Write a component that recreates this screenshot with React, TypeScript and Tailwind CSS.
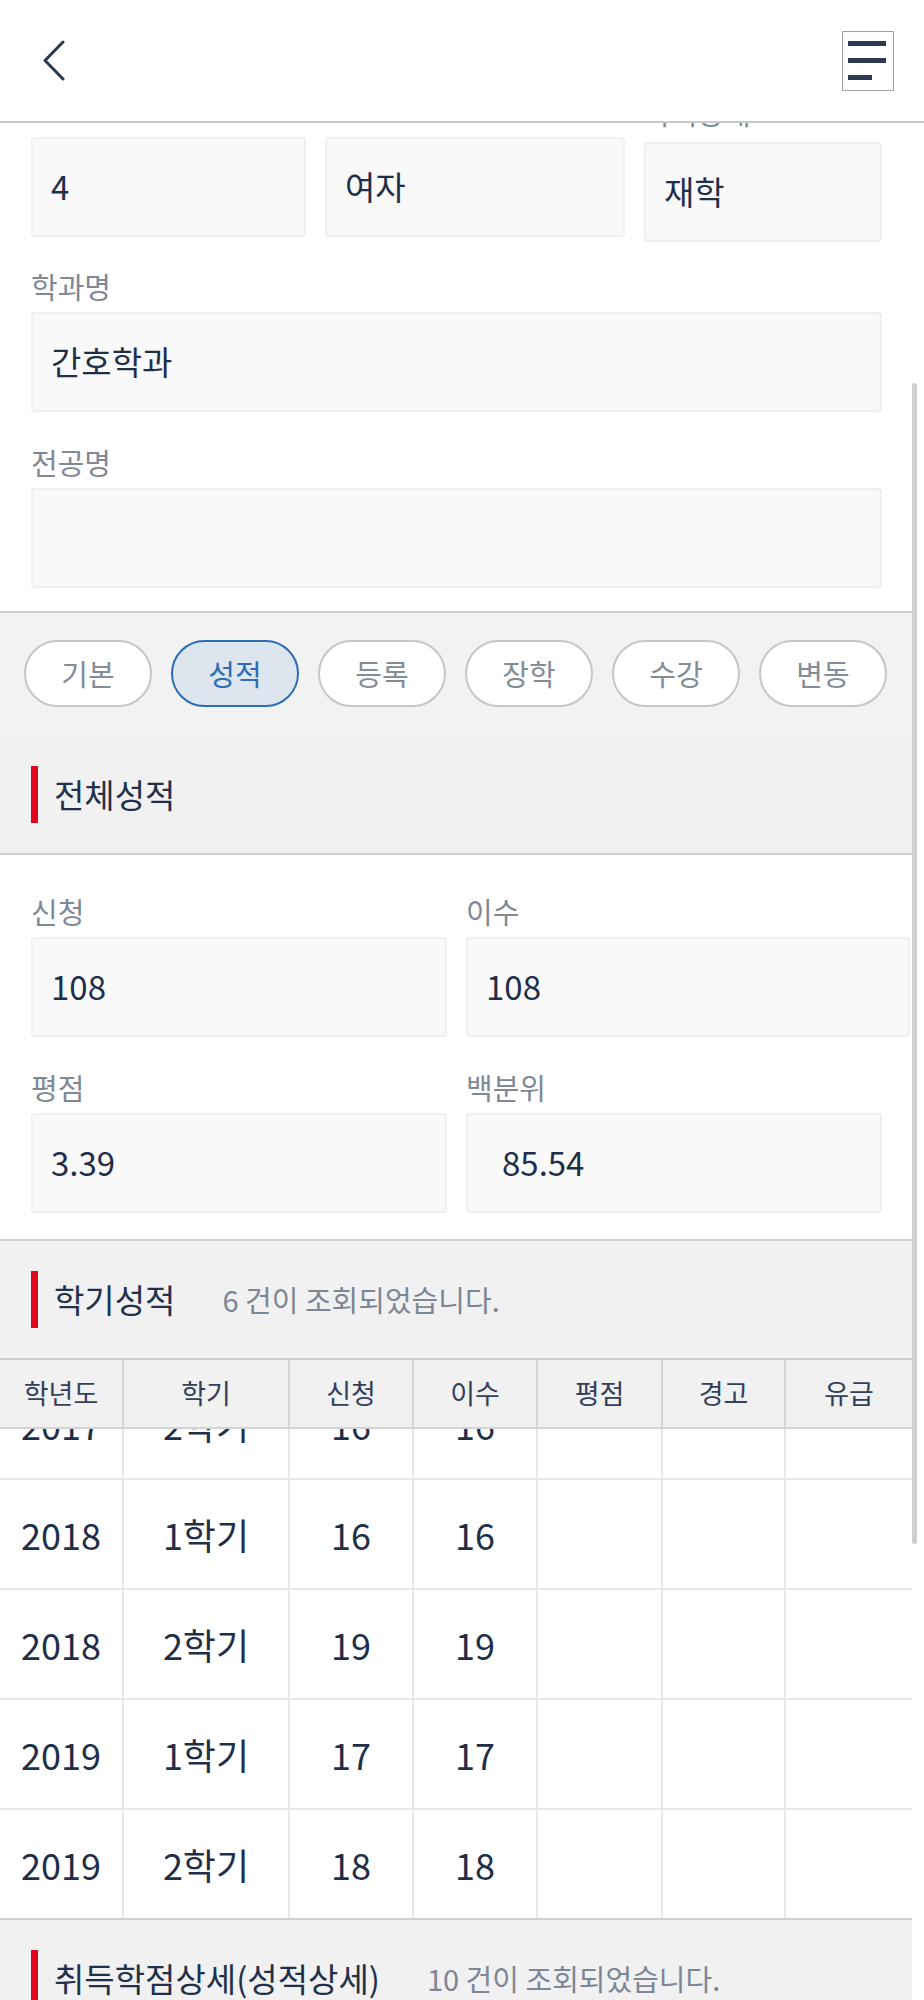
import clsx from "clsx";

const COLS = ["학년도", "학기", "신청", "이수", "평점", "경고", "유급"];

const ROWS = [
  { year: "2017", term: "2학기", req: "16", done: "16" },
  { year: "2018", term: "1학기", req: "16", done: "16" },
  { year: "2018", term: "2학기", req: "19", done: "19" },
  { year: "2019", term: "1학기", req: "17", done: "17" },
  { year: "2019", term: "2학기", req: "18", done: "18" },
];

const TABS = ["기본", "성적", "등록", "장학", "수강", "변동"];

const GRID = "grid grid-cols-[124px_166px_124px_124px_125px_123px_1fr]";

function Field({
  label,
  value,
  className,
  boxClass,
}: {
  label: string;
  value?: string;
  className?: string;
  boxClass?: string;
}) {
  return (
    <div className={clsx("flex flex-col", className)}>
      <div className="h-[40px] text-[29px] leading-[40px] text-[#7f8896]">{label}</div>
      <div
        className={clsx(
          "mt-[6px] flex h-[100px] items-center rounded-[4px] border-2 border-[#efefef] bg-[#f9f9f9] pl-[18px] text-[33px] text-[#1f2f4a]",
          boxClass
        )}
      >
        {value}
      </div>
    </div>
  );
}

function SectionTitle({ title, count }: { title: string; count?: string }) {
  return (
    <div className="flex h-[117px] items-center pl-[31px]">
      <div className="h-[57px] w-[7px] bg-[#e1061b]" />
      <span className="ml-[16px] text-[33px] leading-none text-[#22314b]">{title}</span>
      {count && (
        <span className="ml-[47px] text-[29px] leading-none text-[#7d8696]">{count}</span>
      )}
    </div>
  );
}

export default function App() {
  return (
    <div className="relative h-[2000px] w-[924px] overflow-hidden bg-white font-['Noto_Sans_CJK_KR','Noto_Sans',sans-serif] text-[#1f2f4a]">
      {/* 상단 헤더 */}
      <header className="relative z-10 flex h-[123px] items-center justify-between border-b-2 border-[#cbcbcb] bg-white pl-[42px] pr-[30px]">
        <svg width="24" height="42" viewBox="0 0 24 42" fill="none">
          <path d="M21 2 L3 20.5 L21 39" stroke="#2b3a52" strokeWidth="3" strokeLinecap="round" strokeLinejoin="round" />
        </svg>
        <div className="flex h-[60px] w-[52px] flex-col items-start justify-center gap-[12px] border-[1.5px] border-[#9ea3aa] pl-[5px]">
          <div className="h-[5px] w-[38px] bg-[#2b3a52]" />
          <div className="h-[5px] w-[38px] bg-[#2b3a52]" />
          <div className="h-[5px] w-[24px] bg-[#2b3a52]" />
        </div>
      </header>

      <main className="w-[912px]">
        {/* 기본 정보 */}
        <section className="overflow-hidden border-b-2 border-[#cfcfcf] pb-[23px] pl-[31px] pr-[30px]">
          <div className="-mt-[37px] flex items-start gap-[19px]">
            <Field label="학년" value="4" className="w-[275px]" boxClass="mt-[11px]" />
            <Field label="성별" value="여자" className="w-[300px]" boxClass="mt-[11px]" />
            <Field label="학적상태" value="재학" className="mt-[6px] w-[238px]" boxClass="mt-[10px]" />
          </div>
          <Field label="학과명" value="간호학과" className="mt-[24px]" />
          <Field label="전공명" className="mt-[30px]" />
        </section>

        {/* 탭 */}
        <div className="flex gap-[19px] bg-[#f2f2f2] pb-[29px] pl-[24px] pt-[27px]">
          {TABS.map((t) => (
            <div
              key={t}
              className={clsx(
                "flex h-[67px] w-[128px] items-center justify-center rounded-full border-2 text-[29px]",
                t === "성적"
                  ? "border-[#2d6db4] bg-[#dde5ef] text-[#2d6db4]"
                  : "border-[#c6c6c6] bg-white text-[#848c98]"
              )}
            >
              {t}
            </div>
          ))}
        </div>

        {/* 전체성적 */}
        <div className="border-b-2 border-[#cfcfcf] bg-[#f1f1f1]">
          <SectionTitle title="전체성적" />
        </div>
        <section className="border-b-2 border-[#cfcfcf] pb-[26px] pl-[31px] pt-[36px]">
          <div className="flex gap-[19px]">
            <Field label="신청" value="108" className="w-[416px]" />
            <Field label="이수" value="108" className="w-[444px]" />
          </div>
          <div className="mt-[30px] flex gap-[19px]">
            <Field label="평점" value="3.39" className="w-[416px]" />
            <Field label="백분위" value="85.54" className="w-[416px]" boxClass="pl-[34px]" />
          </div>
        </section>

        {/* 학기성적 */}
        <div className="border-b-2 border-[#cfcfcf] bg-[#f1f1f1]">
          <SectionTitle title="학기성적" count="6 건이 조회되었습니다." />
        </div>
        <div className={clsx(GRID, "h-[69px] border-b-2 border-[#d3d3d3] bg-[#f1f1f1]")}>
          {COLS.map((c, i) => (
            <div
              key={c}
              className={clsx(
                "flex items-center justify-center text-[27px] text-[#33405a]",
                i < COLS.length - 1 && "border-r-2 border-[#d6d6d6]"
              )}
            >
              {c}
            </div>
          ))}
        </div>
        <div className="h-[489px] overflow-hidden">
          <div className="-mt-[59px]">
            {ROWS.map((r, idx) => (
              <div key={idx} className={clsx(GRID, "h-[110px] border-b-2 border-[#e8e8e8]")}>
                {[r.year, r.term, r.req, r.done, "", "", ""].map((v, i) => (
                  <div
                    key={i}
                    className={clsx(
                      "flex items-center justify-center text-[36px] text-[#1f2f4a]",
                      i < 6 && "border-r-2 border-[#e8e8e8]"
                    )}
                  >
                    {v}
                  </div>
                ))}
              </div>
            ))}
          </div>
        </div>

        {/* 취득학점상세 */}
        <div className="border-t-2 border-[#cfcfcf] bg-[#f1f1f1]">
          <SectionTitle title="취득학점상세(성적상세)" count="10 건이 조회되었습니다." />
        </div>
      </main>

      {/* 스크롤바 */}
      <div className="absolute right-[7px] top-[383px] h-[1161px] w-[5px] rounded-full bg-[#cfcfcf]" />
    </div>
  );
}
